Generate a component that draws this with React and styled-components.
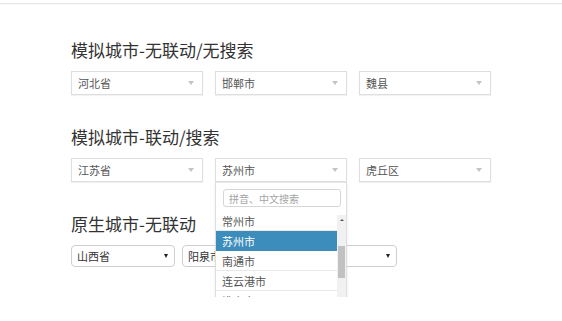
import React from "react";
import styled, { createGlobalStyle } from "styled-components";

const Global = createGlobalStyle`
  html, body { margin: 0; padding: 0; background: #fff; }
  body { font-family: "Noto Sans CJK SC", "Noto Sans", sans-serif; color: #333; }
  * { box-sizing: border-box; }
`;

const TopBar = styled.div`
  height: 4px;
  border-bottom: 1px solid #e6e6e6;
  box-shadow: 0 1px 1px rgba(0, 0, 0, 0.03);
`;

const Page = styled.div`
  padding: 34px 0 0 71px;
`;

const Section = styled.section`
  margin-bottom: 30px;
`;

const Heading = styled.h2`
  margin: 0 0 9px;
  font-size: 17px;
  line-height: 24px;
  font-weight: 400;
  color: #333;
`;

const Row = styled.div`
  display: flex;
  gap: ${(p) => p.$gap}px;
`;

const ChosenWrap = styled.div`
  position: relative;
  width: 132px;
  z-index: ${(p) => (p.$open ? 10 : 1)};
`;

const ChosenBox = styled.div`
  height: 24px;
  display: flex;
  align-items: center;
  justify-content: space-between;
  padding: 0 8px 0 6px;
  border: 1px solid #dedede;
  background: #fff;
  box-shadow: 0 1px 1px rgba(0, 0, 0, 0.05);
  font-size: 11px;
  color: #555;
`;

const SoftArrow = styled.span`
  width: 0;
  height: 0;
  border-left: 3.5px solid transparent;
  border-right: 3.5px solid transparent;
  border-top: 4px solid #c4c4c4;
`;

const Drop = styled.div`
  position: absolute;
  top: 24px;
  left: 0;
  width: 132px;
  height: 127px;
  background: #fff;
  border: 1px solid #dedede;
  border-top: 1px solid #e6e6e6;
  box-shadow: 0 2px 3px rgba(0, 0, 0, 0.08);
  display: flex;
  flex-direction: column;
`;

const SearchArea = styled.div`
  padding: 6px 5px 8px 7px;
`;

const SearchInput = styled.div`
  height: 18px;
  border: 1px solid #d6d6d6;
  border-radius: 3px;
  padding-left: 5px;
  display: flex;
  align-items: center;
  font-size: 10px;
  color: #a4a4a4;
`;

const ListRow = styled.div`
  flex: 1;
  display: flex;
  min-height: 0;
`;

const Items = styled.div`
  flex: 1;
  overflow: hidden;
`;

const ItemsInner = styled.div`
  margin-top: ${(p) => -p.$offset}px;
`;

const Item = styled.div`
  height: 20px;
  display: flex;
  align-items: center;
  padding-left: 6px;
  font-size: 11px;
  color: ${(p) => (p.$active ? "#fff" : "#555")};
  background: ${(p) => (p.$active ? "#3c8dbc" : "#fff")};
  border-bottom: 1px solid ${(p) => (p.$active ? "#3c8dbc" : "#e8e8e8")};
`;

const ScrollTrack = styled.div`
  width: 9px;
  background: #f1f1f1;
  display: flex;
  flex-direction: column;
  align-items: center;
  padding-top: 4px;
`;

const ScrollUp = styled.span`
  width: 0;
  height: 0;
  border-left: 2px solid transparent;
  border-right: 2px solid transparent;
  border-bottom: 2px solid #555;
`;

const ScrollThumb = styled.div`
  width: 7px;
  height: 32px;
  margin-top: 25px;
  background: #c1c1c1;
`;

const NativeBox = styled.div`
  width: 104px;
  height: 22px;
  display: flex;
  align-items: center;
  justify-content: space-between;
  padding: 0 6px 0 5px;
  border: 1px solid #cfcfcf;
  border-radius: 4px;
  background: #fff;
  font-size: 11px;
  color: #333;
`;

const DarkArrow = styled.span`
  width: 0;
  height: 0;
  border-left: 2.5px solid transparent;
  border-right: 2.5px solid transparent;
  border-top: 4px solid #222;
`;

function Chosen({ value, open, children }) {
  return (
    <ChosenWrap $open={open}>
      <ChosenBox>
        <span>{value}</span>
        <SoftArrow />
      </ChosenBox>
      {open && children}
    </ChosenWrap>
  );
}

const cities = ["常州市", "苏州市", "南通市", "连云港市", "淮安市", "盐城市"];

export default function App() {
  return (
    <>
      <Global />
      <TopBar />
      <Page>
        <Section>
          <Heading>模拟城市-无联动/无搜索</Heading>
          <Row $gap={12}>
            <Chosen value="河北省" />
            <Chosen value="邯郸市" />
            <Chosen value="魏县" />
          </Row>
        </Section>
        <Section>
          <Heading>模拟城市-联动/搜索</Heading>
          <Row $gap={12}>
            <Chosen value="江苏省" />
            <Chosen value="苏州市" open>
              <Drop>
                <SearchArea>
                  <SearchInput>拼音、中文搜索</SearchInput>
                </SearchArea>
                <ListRow>
                  <Items>
                    <ItemsInner $offset={4}>
                      {cities.map((c) => (
                        <Item key={c} $active={c === "苏州市"}>
                          {c}
                        </Item>
                      ))}
                    </ItemsInner>
                  </Items>
                  <ScrollTrack>
                    <ScrollUp />
                    <ScrollThumb />
                  </ScrollTrack>
                </ListRow>
              </Drop>
            </Chosen>
            <Chosen value="虎丘区" />
          </Row>
        </Section>
        <Section>
          <Heading>原生城市-无联动</Heading>
          <Row $gap={7}>
            <NativeBox>
              <span>山西省</span>
              <DarkArrow />
            </NativeBox>
            <NativeBox>
              <span>阳泉市</span>
              <DarkArrow />
            </NativeBox>
            <NativeBox>
              <span>城区</span>
              <DarkArrow />
            </NativeBox>
          </Row>
        </Section>
      </Page>
    </>
  );
}
